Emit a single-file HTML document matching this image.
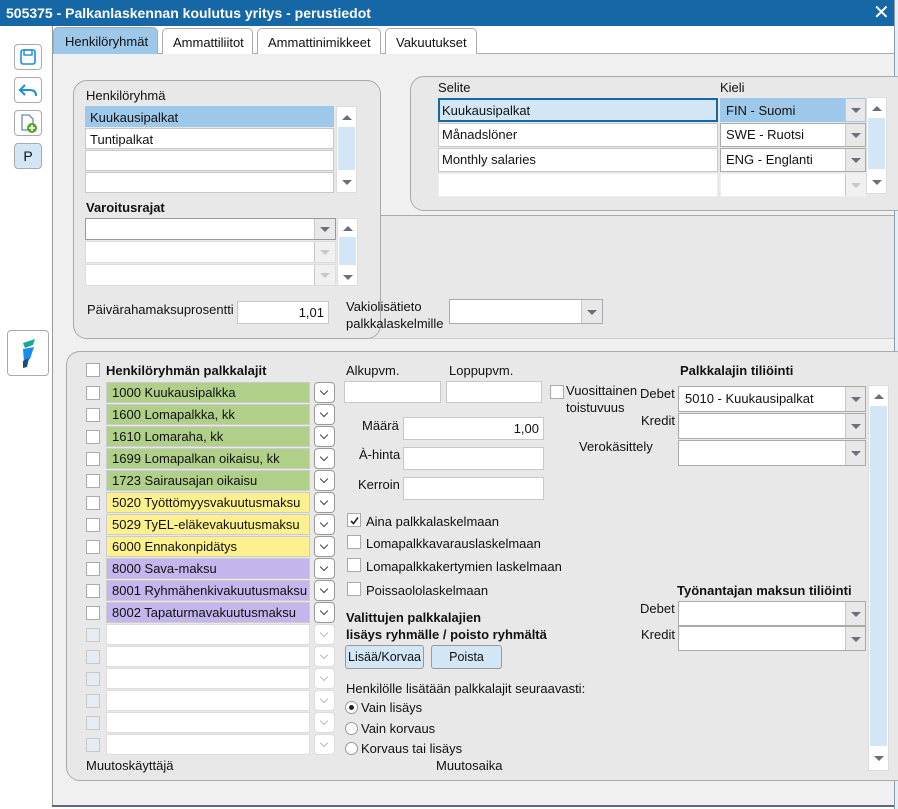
<!DOCTYPE html>
<html><head><meta charset="utf-8"><style>
*{box-sizing:border-box;margin:0;padding:0}
body{width:898px;height:809px;overflow:hidden;background:#fff;font-family:"Liberation Sans",Arial,sans-serif;font-size:13px;color:#111;position:relative}
.a{position:absolute}
.t{position:absolute;white-space:nowrap;line-height:15px}
.b{font-weight:bold}
.inp{position:absolute;background:#fff;border:1px solid #c8c8c8}
.dd{position:absolute;background:#e8e8e8;border-left:1px solid #c8c8c8}
.dd:after{content:"";position:absolute;left:50%;top:50%;margin:-2px 0 0 -5px;border-left:5px solid transparent;border-right:5px solid transparent;border-top:5px solid #6a6f80}
.dd.dis:after{border-top-color:#c8c8c8}
.sb{position:absolute;background:#fff;border:1px solid #ddd}
.sb i{position:absolute;left:1px;right:1px;background:#d2e6f6}
.up:after,.dn:after{content:"";position:absolute;left:50%;margin-left:-5px;border-left:5px solid transparent;border-right:5px solid transparent}
.up:after{border-bottom:5px solid #6a6f80}
.dn:after{border-top:5px solid #6a6f80}
.cb{position:absolute;width:14px;height:14px;background:#fff;border:1px solid #aaa}
.cbd{background:#e6ecf4;border-color:#c8c8c8}
.pill{position:absolute;height:21px;border:1px solid #ccc;padding-left:5px;line-height:19px}
.chev{position:absolute;width:21px;height:21px;background:#fff;border:1px solid #999;border-radius:4px}
.chev:after{content:"";position:absolute;left:6px;top:5px;width:5px;height:5px;border-right:1.6px solid #444;border-bottom:1.6px solid #444;transform:rotate(45deg)}
.chev.dis{border-color:#ddd}.chev.dis:after{border-color:#bbb}
.panel{position:absolute;background:#e8e8e8;border:1px solid #aaa;border-radius:14px}
.rad{position:absolute;width:13px;height:13px;border:1px solid #999;border-radius:50%;background:#fff}
.btn{position:absolute;background:#d2e6f6;border:1px solid #999;border-radius:3px;text-align:center;line-height:22px;font-size:12.5px}
.sbtn{position:absolute;width:28px;height:26px;background:#fff;border:1px solid #aaa;border-radius:4px}
</style></head><body>
<div class="a" style="left:0;top:0;width:894px;height:26px;background:#1667a6"></div>
<div class="t b" style="left:6px;top:6px;color:#fff;font-size:14px">505375 - Palkanlaskennan koulutus yritys - perustiedot</div>
<div class="t" style="left:873px;top:3px;color:#fff;font-size:20px;line-height:20px">✕</div>
<div class="a" style="left:894px;top:0;width:4px;height:809px;background:#e8eef6;border-left:1px solid #8a9ab0"></div>
<div class="a" style="left:52px;top:26px;width:1px;height:780px;background:#999"></div>
<div class="sbtn" style="left:14px;top:44px"><svg width="26" height="24"><rect x="6" y="5" width="14" height="14" rx="2" fill="none" stroke="#1a8fd8" stroke-width="1.6"/><rect x="9" y="5" width="8" height="5" fill="none" stroke="#1a8fd8" stroke-width="1.4"/></svg></div>
<div class="sbtn" style="left:14px;top:77px"><svg width="26" height="24"><path d="M10 7 L5 12 L10 17 M5 12 H15 Q21 12 21 18" fill="none" stroke="#1a8fd8" stroke-width="2"/></svg></div>
<div class="sbtn" style="left:14px;top:110px"><svg width="26" height="24"><path d="M7 4 H14 L18 8 V19 H7 Z" fill="#fff" stroke="#6a8ab0" stroke-width="1.3"/><circle cx="17" cy="17" r="5" fill="#5aa02c"/><path d="M14 17 H20 M17 14 V20" stroke="#fff" stroke-width="1.6"/></svg></div>
<div class="sbtn" style="left:14px;top:143px;background:#d2e6f6;text-align:center;line-height:24px;font-size:14px">P</div>
<div class="a" style="left:7px;top:330px;width:42px;height:46px;background:#fff;border:1px solid #aaa;border-radius:4px"><svg width="40" height="44"><path d="M15 12 L27 8 L25 14 L17 17 Z" fill="#1aa89a"/><path d="M15 18 L26 16 L22 28 L16 31 Z" fill="#1a8ee8"/><path d="M15 30 L21 27 L19 36 L15 37 Z" fill="#1c4c7a"/></svg></div>
<div class="a" style="left:53px;top:54px;width:841px;height:752px;background:#f0f0f0"></div>
<div class="a" style="left:53px;top:53px;width:841px;height:1px;background:#aaa"></div>
<div class="a" style="left:53px;top:27px;width:105px;height:27px;background:#9dc8ea;border:1px solid #aaa;border-bottom:0;border-radius:5px 5px 0 0"></div>
<div class="t" style="left:65px;top:34px">Henkilöryhmät</div>
<div class="a" style="left:162px;top:28px;width:91px;height:26px;background:#fff;border:1px solid #aaa;border-bottom:0;border-radius:5px 5px 0 0"></div>
<div class="t" style="left:173px;top:35px">Ammattiliitot</div>
<div class="a" style="left:257px;top:28px;width:124px;height:26px;background:#fff;border:1px solid #aaa;border-bottom:0;border-radius:5px 5px 0 0"></div>
<div class="t" style="left:268px;top:35px">Ammattinimikkeet</div>
<div class="a" style="left:385px;top:28px;width:92px;height:26px;background:#fff;border:1px solid #aaa;border-bottom:0;border-radius:5px 5px 0 0"></div>
<div class="t" style="left:396px;top:35px">Vakuutukset</div>
<div class="a" style="left:370px;top:215px;width:524px;height:124px;background:#e8e8e8;border-top:1px solid #aaa;border-bottom:1px solid #ccc"></div>
<div class="panel" style="left:73px;top:80px;width:308px;height:259px"></div>
<div class="t" style="left:86px;top:88px">Henkilöryhmä</div>
<div class="inp" style="left:85px;top:106px;width:249px;height:21px;background:#9dc8ea;border-color:#9dc8ea"></div>
<div class="t" style="left:90px;top:110px">Kuukausipalkat</div>
<div class="inp" style="left:85px;top:128px;width:249px;height:21px"></div>
<div class="t" style="left:90px;top:132px">Tuntipalkat</div>
<div class="inp" style="left:85px;top:150px;width:249px;height:21px"></div>
<div class="inp" style="left:85px;top:172px;width:249px;height:21px"></div>
<div class="sb" style="left:336px;top:106px;width:21px;height:87px"><i style="top:20px;bottom:22px"></i><div class="up a" style="left:0;top:8px;width:19px"></div><div class="dn a" style="left:0;top:73px;width:19px"></div></div>
<div class="t b" style="left:86px;top:200px">Varoitusrajat</div>
<div class="inp" style="left:85px;top:218px;width:251px;height:22px;border-color:#999"><div class="dd" style="right:0;top:0;width:21px;height:20px"></div></div>
<div class="inp" style="left:85px;top:241px;width:251px;height:22px;border-color:#ddd"><div class="dd dis" style="right:0;top:0;width:21px;height:20px;background:#f0f0f0"></div></div>
<div class="inp" style="left:85px;top:264px;width:251px;height:22px;border-color:#ddd"><div class="dd dis" style="right:0;top:0;width:21px;height:20px;background:#f0f0f0"></div></div>
<div class="sb" style="left:337px;top:218px;width:21px;height:68px"><i style="top:18px;bottom:20px"></i><div class="up a" style="left:0;top:7px;width:19px"></div><div class="dn a" style="left:0;top:56px;width:19px"></div></div>
<div class="t" style="left:87px;top:302px">Päivärahamaksuprosentti</div>
<div class="inp" style="left:237px;top:301px;width:92px;height:23px;text-align:right;padding:3px 4px;line-height:15px">1,01</div>
<div class="t" style="left:346px;top:298px;line-height:17px">Vakiolisätieto<br>palkkalaskelmille</div>
<div class="inp" style="left:449px;top:299px;width:154px;height:25px;border-color:#aaa"><div class="dd" style="right:0;top:0;width:21px;height:23px"></div></div>
<div class="panel" style="left:410px;top:76px;width:500px;height:135px"></div>
<div class="t" style="left:438px;top:80px">Selite</div>
<div class="t" style="left:720px;top:80px">Kieli</div>
<div class="inp" style="left:438px;top:98px;width:280px;height:24px;background:#d2e6f6;border:2px solid #1667a6"></div>
<div class="t" style="left:442px;top:103px">Kuukausipalkat</div>
<div class="inp" style="left:438px;top:123px;width:280px;height:24px"></div>
<div class="t" style="left:442px;top:127px">Månadslöner</div>
<div class="inp" style="left:438px;top:148px;width:280px;height:24px"></div>
<div class="t" style="left:442px;top:152px">Monthly salaries</div>
<div class="inp" style="left:438px;top:173px;width:280px;height:24px;border-color:#eee"></div>
<div class="inp" style="left:720px;top:98px;width:146px;height:24px;background:#9dc8ea;border-color:#9dc8ea"><div class="dd" style="right:0;top:0;width:20px;height:22px"></div></div>
<div class="t" style="left:726px;top:103px">FIN - Suomi</div>
<div class="inp" style="left:720px;top:123px;width:146px;height:24px;border-color:#aaa"><div class="dd" style="right:0;top:0;width:20px;height:22px"></div></div>
<div class="t" style="left:726px;top:127px">SWE - Ruotsi</div>
<div class="inp" style="left:720px;top:148px;width:146px;height:24px;border-color:#aaa"><div class="dd" style="right:0;top:0;width:20px;height:22px"></div></div>
<div class="t" style="left:726px;top:152px">ENG - Englanti</div>
<div class="inp" style="left:720px;top:173px;width:146px;height:24px;border-color:#eee"><div class="dd dis" style="right:0;top:0;width:20px;height:22px;background:#f0f0f0"></div></div>
<div class="sb" style="left:866px;top:97px;width:21px;height:97px"><i style="top:20px;bottom:24px"></i><div class="up a" style="left:0;top:8px;width:19px"></div><div class="dn a" style="left:0;top:82px;width:19px"></div></div>
<div class="panel" style="left:66px;top:351px;width:845px;height:430px"></div>
<div class="cb" style="left:86px;top:363px"></div>
<div class="t b" style="left:106px;top:363px">Henkilöryhmän palkkalajit</div>
<div class="cb" style="left:86px;top:386px"></div><div class="pill" style="left:106px;top:382px;width:204px;background:#b0d08a">1000 Kuukausipalkka</div><div class="chev" style="left:314px;top:382px"></div>
<div class="cb" style="left:86px;top:408px"></div><div class="pill" style="left:106px;top:404px;width:204px;background:#b0d08a">1600 Lomapalkka, kk</div><div class="chev" style="left:314px;top:404px"></div>
<div class="cb" style="left:86px;top:430px"></div><div class="pill" style="left:106px;top:426px;width:204px;background:#b0d08a">1610 Lomaraha, kk</div><div class="chev" style="left:314px;top:426px"></div>
<div class="cb" style="left:86px;top:452px"></div><div class="pill" style="left:106px;top:448px;width:204px;background:#b0d08a">1699 Lomapalkan oikaisu, kk</div><div class="chev" style="left:314px;top:448px"></div>
<div class="cb" style="left:86px;top:474px"></div><div class="pill" style="left:106px;top:470px;width:204px;background:#b0d08a">1723 Sairausajan oikaisu</div><div class="chev" style="left:314px;top:470px"></div>
<div class="cb" style="left:86px;top:496px"></div><div class="pill" style="left:106px;top:492px;width:204px;background:#fdf08e">5020 Työttömyysvakuutusmaksu</div><div class="chev" style="left:314px;top:492px"></div>
<div class="cb" style="left:86px;top:518px"></div><div class="pill" style="left:106px;top:514px;width:204px;background:#fdf08e">5029 TyEL-eläkevakuutusmaksu</div><div class="chev" style="left:314px;top:514px"></div>
<div class="cb" style="left:86px;top:540px"></div><div class="pill" style="left:106px;top:536px;width:204px;background:#fdf08e">6000 Ennakonpidätys</div><div class="chev" style="left:314px;top:536px"></div>
<div class="cb" style="left:86px;top:562px"></div><div class="pill" style="left:106px;top:558px;width:204px;background:#c4b5ec">8000 Sava-maksu</div><div class="chev" style="left:314px;top:558px"></div>
<div class="cb" style="left:86px;top:584px"></div><div class="pill" style="left:106px;top:580px;width:204px;background:#c4b5ec">8001 Ryhmähenkivakuutusmaksu</div><div class="chev" style="left:314px;top:580px"></div>
<div class="cb" style="left:86px;top:606px"></div><div class="pill" style="left:106px;top:602px;width:204px;background:#c4b5ec">8002 Tapaturmavakuutusmaksu</div><div class="chev" style="left:314px;top:602px"></div>
<div class="cb cbd" style="left:86px;top:628px"></div><div class="pill" style="left:106px;top:624px;width:204px;background:#fff;border-color:#ddd"></div><div class="chev dis" style="left:314px;top:624px"></div>
<div class="cb cbd" style="left:86px;top:650px"></div><div class="pill" style="left:106px;top:646px;width:204px;background:#fff;border-color:#ddd"></div><div class="chev dis" style="left:314px;top:646px"></div>
<div class="cb cbd" style="left:86px;top:672px"></div><div class="pill" style="left:106px;top:668px;width:204px;background:#fff;border-color:#ddd"></div><div class="chev dis" style="left:314px;top:668px"></div>
<div class="cb cbd" style="left:86px;top:694px"></div><div class="pill" style="left:106px;top:690px;width:204px;background:#fff;border-color:#ddd"></div><div class="chev dis" style="left:314px;top:690px"></div>
<div class="cb cbd" style="left:86px;top:716px"></div><div class="pill" style="left:106px;top:712px;width:204px;background:#fff;border-color:#ddd"></div><div class="chev dis" style="left:314px;top:712px"></div>
<div class="cb cbd" style="left:86px;top:738px"></div><div class="pill" style="left:106px;top:734px;width:204px;background:#fff;border-color:#ddd"></div><div class="chev dis" style="left:314px;top:734px"></div>
<div class="t" style="left:86px;top:758px">Muutoskäyttäjä</div>
<div class="t" style="left:346px;top:363px">Alkupvm.</div>
<div class="t" style="left:449px;top:363px">Loppupvm.</div>
<div class="inp" style="left:344px;top:381px;width:97px;height:22px"></div>
<div class="inp" style="left:446px;top:381px;width:96px;height:22px"></div>
<div class="cb" style="left:550px;top:385px"></div>
<div class="t" style="left:566px;top:382px;line-height:17px">Vuosittainen<br>toistuvuus</div>
<div class="t" style="left:362px;top:418px">Määrä</div>
<div class="inp" style="left:403px;top:417px;width:141px;height:23px;text-align:right;padding:3px 4px;line-height:15px">1,00</div>
<div class="t" style="left:359px;top:447px">À-hinta</div>
<div class="inp" style="left:403px;top:447px;width:141px;height:23px"></div>
<div class="t" style="left:358px;top:477px">Kerroin</div>
<div class="inp" style="left:403px;top:477px;width:141px;height:23px"></div>
<div class="cb" style="left:347px;top:513px"><svg class="a" style="left:1px;top:1px" width="11" height="11"><path d="M2 6 L4.5 8.5 L9 2.5" fill="none" stroke="#222" stroke-width="1.6"/></svg></div>
<div class="t" style="left:366px;top:514px">Aina palkkalaskelmaan</div>
<div class="cb" style="left:347px;top:535px"></div><div class="t" style="left:366px;top:536px">Lomapalkkavarauslaskelmaan</div>
<div class="cb" style="left:347px;top:558px"></div><div class="t" style="left:366px;top:559px">Lomapalkkakertymien laskelmaan</div>
<div class="cb" style="left:347px;top:582px"></div><div class="t" style="left:366px;top:583px">Poissaololaskelmaan</div>
<div class="t b" style="left:346px;top:609px;line-height:17px">Valittujen palkkalajien<br>lisäys ryhmälle / poisto ryhmältä</div>
<div class="btn" style="left:345px;top:645px;width:79px;height:24px">Lisää/Korvaa</div>
<div class="btn" style="left:431px;top:645px;width:71px;height:24px">Poista</div>
<div class="t" style="left:346px;top:681px">Henkilölle lisätään palkkalajit seuraavasti:</div>
<div class="rad" style="left:345px;top:701px"><div class="a" style="left:3px;top:3px;width:5px;height:5px;border-radius:50%;background:#222"></div></div>
<div class="t" style="left:361px;top:700px">Vain lisäys</div>
<div class="rad" style="left:345px;top:722px"></div><div class="t" style="left:361px;top:721px">Vain korvaus</div>
<div class="rad" style="left:345px;top:742px"></div><div class="t" style="left:361px;top:741px">Korvaus tai lisäys</div>
<div class="t" style="left:436px;top:758px">Muutosaika</div>
<div class="t b" style="left:680px;top:363px">Palkkalajin tiliöinti</div>
<div class="t" style="left:640px;top:386px">Debet</div>
<div class="t" style="left:641px;top:413px">Kredit</div>
<div class="t" style="left:579px;top:439px">Verokäsittely</div>
<div class="inp" style="left:678px;top:386px;width:188px;height:26px;border-color:#aaa"><div class="dd" style="right:0;top:0;width:20px;height:24px"></div></div>
<div class="t" style="left:685px;top:391px">5010 - Kuukausipalkat</div>
<div class="inp" style="left:678px;top:413px;width:188px;height:26px;border-color:#aaa"><div class="dd" style="right:0;top:0;width:20px;height:24px"></div></div>
<div class="inp" style="left:678px;top:440px;width:188px;height:26px;border-color:#aaa"><div class="dd" style="right:0;top:0;width:20px;height:24px"></div></div>
<div class="t b" style="left:677px;top:583px">Työnantajan maksun tiliöinti</div>
<div class="t" style="left:640px;top:601px">Debet</div>
<div class="t" style="left:641px;top:627px">Kredit</div>
<div class="inp" style="left:678px;top:601px;width:188px;height:25px;border-color:#aaa"><div class="dd" style="right:0;top:0;width:20px;height:23px"></div></div>
<div class="inp" style="left:678px;top:626px;width:188px;height:25px;border-color:#aaa"><div class="dd" style="right:0;top:0;width:20px;height:23px"></div></div>
<div class="sb" style="left:868px;top:385px;width:21px;height:386px"><i style="top:20px;bottom:24px"></i><div class="up a" style="left:0;top:8px;width:19px"></div><div class="dn a" style="left:0;top:370px;width:19px"></div></div>
<div class="a" style="left:52px;top:805px;width:842px;height:2px;background:#5a6a80"></div>
</body></html>
